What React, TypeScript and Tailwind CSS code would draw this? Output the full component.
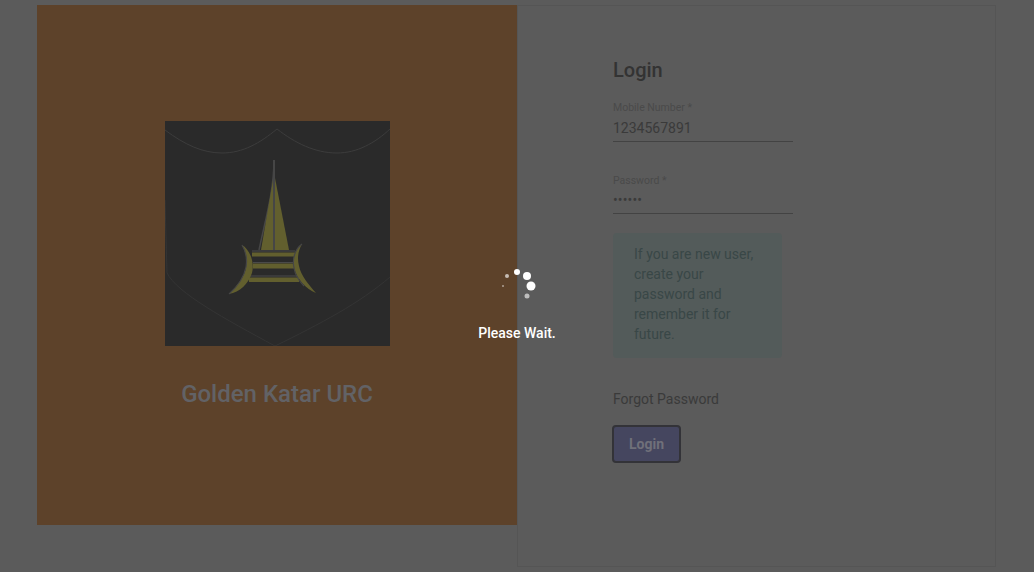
const fontStack = { fontFamily: "Roboto, sans-serif" }

function Logo() {
  return (
    <svg width="225" height="225" viewBox="0 0 225 225" fill="none" className="bg-[#2a2a2a]">
      <path d="M0 9C20 24 38 32 57 32C78 32 95 22 112 8C130 22 150 32 172 32C192 32 210 22 225 8" stroke="#3c3c3c" strokeWidth="1" />
      <path d="M0 79L2 152C12 172 60 198 110 225C155 203 195 182 225 156" stroke="#343434" strokeWidth="1" />
      <path d="M109 39C109 70 100 100 94 129" stroke="#464646" strokeWidth="1.5" />
      <path d="M109 39V129" stroke="#464646" strokeWidth="2" />
      <path d="M108 59L96 129H108Z" fill="#625f2e" />
      <path d="M110 57V129H124Z" fill="#625f2e" />
      <path d="M87 130H130M88 141.5H129M84 155H134" stroke="#4a4a4a" strokeWidth="1.2" />
      <path d="M87 131.5H130V135.5H87ZM88 142.5H129V147.5H88ZM84 156.5H134V161H84Z" fill="#625f2e" />
      <path d="M77 124C84 128 90 140 87 152C83 163 75 171 64 173C72 165 80 155 81 146C82 138 81 131 77 124Z" fill="#625f2e" />
      <path d="M77 124C82 132 82 140 81 146C79 156 72 166 64 173" stroke="#464646" strokeWidth="1.2" />
      <path d="M137 123C130 128 127 138 129 147C132 158 141 168 151 172C144 164 136 155 134 145C132 137 133 130 137 123Z" fill="#625f2e" />
      <path d="M137 123C130 128 127 138 129 147C130 153 134 160 139 165" stroke="#464646" strokeWidth="1.2" />
    </svg>
  )
}

function Spinner() {
  return (
    <svg width="40" height="40" viewBox="0 0 40 40" fill="#fff">
      <circle cx="6" cy="20" r="1" opacity="0.5" />
      <circle cx="10" cy="10" r="2" opacity="0.65" />
      <circle cx="20" cy="6" r="3" />
      <circle cx="30" cy="10" r="4" />
      <circle cx="34" cy="20" r="4.5" />
      <circle cx="30" cy="30" r="2.5" opacity="0.6" />
    </svg>
  )
}

export default function App() {
  return (
    <div className="relative h-[572px] w-[1034px] overflow-hidden bg-[#5b5b5b]" style={fontStack}>
      <div className="flex pl-[37px] pt-[5px]">
        <div className="flex h-[520px] w-[480px] flex-col items-center bg-[#5d422a] pt-[116px]">
          <Logo />
          <div className="mt-[32px] text-2xl leading-8 font-medium text-[#626266]">Golden Katar URC</div>
        </div>
        <div className="h-[562px] w-[479px] border border-[#555555] pl-[95px] pt-[48px]">
          <h1 className="text-xl leading-8 font-medium text-[#333333]">Login</h1>
          <div className="mt-[16px] w-[180px] border-b border-[#434343] pb-[3px]">
            <div className="text-[10.5px] leading-3 text-[#4a4a4a]">Mobile Number *</div>
            <div className="mt-1 text-sm leading-5 text-[#3a3a3a]">1234567891</div>
          </div>
          <div className="mt-[33px] w-[180px] border-b border-[#434343] pb-[3px]">
            <div className="text-[10.5px] leading-3 text-[#4a4a4a]">Password *</div>
            <div className="mt-[3px] text-sm leading-5 tracking-[0.15px] text-[#3a3a3a]">••••••</div>
          </div>
          <div className="mt-[19px] h-[125px] w-[169px] rounded bg-[#535b5a] py-[11px] pl-[21px] pr-6 text-sm leading-5 text-[#394747]">
            If you are new user, create your password and remember it for future.
          </div>
          <div className="mt-[31px] text-sm leading-5 text-[#3a3a3a]">Forgot Password</div>
          <button className="-ml-px mt-[16px] flex h-[38px] w-[69px] items-center justify-center rounded border-2 border-[#333338] bg-[#45465f] pb-px text-sm font-bold text-[#70707a]">
            Login
          </button>
        </div>
      </div>
      <div className="absolute left-[497px] top-[266px] flex w-10 flex-col items-center">
        <Spinner />
        <div className="mt-[17px] whitespace-nowrap text-sm leading-5 font-medium text-white">Please Wait.</div>
      </div>
    </div>
  )
}
